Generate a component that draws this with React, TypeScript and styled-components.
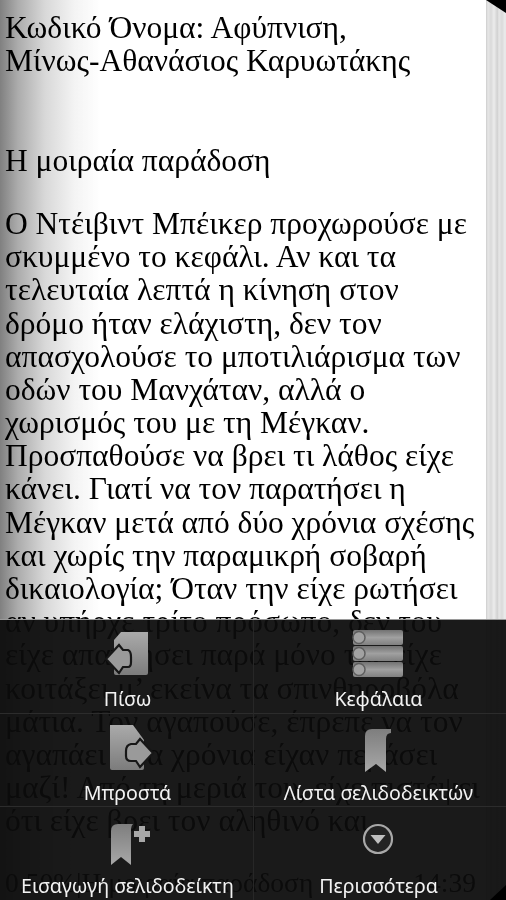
import styled, { createGlobalStyle } from 'styled-components';

const Global = createGlobalStyle`
  html, body {
    margin: 0;
    padding: 0;
    height: 900px;
    overflow: hidden;
    background: #fff;
  }
`;

const Screen = styled.div`
  position: relative;
  width: 506px;
  height: 900px;
  overflow: hidden;
  background: #fff;
`;

const Page = styled.div`
  padding: 11px 0 0 5px;
  font-family: 'Liberation Serif', 'Times New Roman', serif;
  font-size: 31.5px;
  line-height: 33.2px;
  color: #000;
  white-space: nowrap;
`;

const Line = styled.div<{ $short?: boolean }>`
  height: ${({ $short }) => ($short ? '30px' : '33.2px')};
`;

const StatusLine = styled.div`
  position: absolute;
  left: 5px;
  right: 30px;
  top: 866px;
  display: flex;
  justify-content: space-between;
  font-family: 'Liberation Serif', 'Times New Roman', serif;
  font-size: 27.5px;
  line-height: 33px;
  color: #000;
`;

const LeftShade = styled.div`
  position: absolute;
  left: 0;
  top: 0;
  bottom: 0;
  width: 100px;
  background: linear-gradient(to right, #808080 0%, #acacac 18%, #d8d8d8 45%, #f4f4f4 75%, rgba(255, 255, 255, 0) 100%);
  mix-blend-mode: multiply;
`;

const PageEdge = styled.div`
  position: absolute;
  right: 0;
  top: 0;
  bottom: 0;
  width: 20px;
  background: repeating-linear-gradient(
    to right,
    #cdcdcd 0,
    #e6e6e6 2px,
    #dadada 5px,
    #ececec 8px,
    #d4d4d4 11px
  );
`;

const Corner = styled.svg<{ $bottom?: boolean }>`
  position: absolute;
  right: 0;
  ${({ $bottom }) => ($bottom ? 'bottom: 0;' : 'top: 0;')}
  display: block;
`;

const Menu = styled.div`
  position: absolute;
  left: 0;
  right: 0;
  bottom: 0;
  height: 280px;
  display: grid;
  grid-template-columns: 1fr 1fr;
  grid-template-rows: 94px 93px 93px;
  background: rgba(12, 12, 12, 0.94);
  box-shadow: 0 -1px 0 #9a9a9a;
  box-sizing: border-box;
`;

const Item = styled.div<{ $last?: boolean; $right?: boolean }>`
  display: flex;
  flex-direction: column;
  align-items: center;
  padding-top: 10px;
  box-sizing: border-box;
  overflow: hidden;
  border-bottom: ${({ $last }) => ($last ? 'none' : '1px solid #2c2c2c')};
  border-left: ${({ $right }) => ($right ? '1px solid #272727' : 'none')};
`;

const IconBox = styled.svg`
  display: block;
  width: 48px;
  height: 48px;
  flex: none;
  overflow: visible;
  filter: blur(0.5px);
`;

const Label = styled.div<{ $right?: boolean }>`
  margin: ${({ $right }) => ($right ? '9px 3px 0 0' : '9px 0 0 2px')};
  font-family: 'Noto Sans', Roboto, sans-serif;
  font-size: 19.6px;
  line-height: 24px;
  color: #f2f2f2;
  white-space: nowrap;
`;

const lines = [
  'Κωδικό Όνομα: Αφύπνιση,',
  'Μίνως-Αθανάσιος Καρυωτάκης',
  '',
  '',
  'Η μοιραία παράδοση',
  '',
  'Ο Ντέιβιντ Μπέικερ προχωρούσε με',
  'σκυμμένο το κεφάλι. Αν και τα',
  'τελευταία λεπτά η κίνηση στον',
  'δρόμο ήταν ελάχιστη, δεν τον',
  'απασχολούσε το μποτιλιάρισμα των',
  'οδών του Μανχάταν, αλλά ο',
  'χωρισμός του με τη Μέγκαν.',
  'Προσπαθούσε να βρει τι λάθος είχε',
  'κάνει. Γιατί να τον παρατήσει η',
  'Μέγκαν μετά από δύο χρόνια σχέσης',
  'και χωρίς την παραμικρή σοβαρή',
  'δικαιολογία; Όταν την είχε ρωτήσει',
  'αν υπήρχε τρίτο πρόσωπο, δεν του',
  'είχε απαντήσει παρά μόνο της είχε',
  'κοιτάξει μ’ εκείνα τα σπινθηροβόλα',
  'μάτια. Τον αγαπούσε, έπρεπε να τον',
  'αγαπάει όσα χρόνια είχαν περάσει',
  'μαζί! Από τη μεριά του, είχε πιστέψει',
  'ότι είχε βρει τον αληθινό και',
];

const Gradients = () => (
  <svg width="0" height="0" style={{ position: 'absolute' }}>
    <defs>
      <linearGradient id="pageFill" x1="0" y1="0" x2="0" y2="1">
        <stop offset="0" stopColor="#aaaaaa" />
        <stop offset="1" stopColor="#7c7c7c" />
      </linearGradient>
      <linearGradient id="ribbonFill" x1="0" y1="0" x2="0" y2="1">
        <stop offset="0" stopColor="#7e7e7e" />
        <stop offset="1" stopColor="#a8a8a8" />
      </linearGradient>
      <linearGradient id="barFill" x1="0" y1="0" x2="0" y2="1">
        <stop offset="0" stopColor="#727272" />
        <stop offset="0.5" stopColor="#a0a0a0" />
        <stop offset="1" stopColor="#808080" />
      </linearGradient>
    </defs>
  </svg>
);

const BackIcon = () => (
  <IconBox viewBox="0 0 48 48">
    <path d="M11 10L18 2H45V43Q45 45 43 45H13Q11 45 11 43Z" fill="url(#pageFill)" />
    <path
      d="M3 29L16 15L20 20H25Q28 21 28 27V32Q28 37 25 37H20L16 43Z"
      fill="#9a9a9a"
      stroke="#171717"
      strokeWidth="2.2"
    />
  </IconBox>
);

const ForwardIcon = () => (
  <IconBox viewBox="0 0 48 48">
    <path d="M7 1H30L41 16V44Q41 46 39 46H9Q7 46 7 44Z" fill="url(#pageFill)" />
    <path
      d="M50 29L37 15L33 20H28Q23 21 23 27V32Q23 37 28 37H33L37 43Z"
      fill="#9a9a9a"
      stroke="#171717"
      strokeWidth="2.2"
    />
  </IconBox>
);

const AddBookmarkIcon = () => (
  <IconBox viewBox="0 0 48 48">
    <path d="M8 14Q8 7 15 7H30Q28 9 28 12V48L18 40L8 48Z" fill="url(#ribbonFill)" />
    <path d="M36 9H42V14H47V20H42V25H36V20H31V14H36Z" fill="#a8a8a8" />
  </IconBox>
);

const ChaptersIcon = () => (
  <IconBox viewBox="0 0 48 48">
    {[0, 16, 32].map((y) => (
      <g key={y}>
        <rect x="-3" y={y} width="50" height="15" rx="2" fill="url(#barFill)" />
        <circle cx="3" cy={y + 7.5} r="6" fill="#a2a2a2" stroke="#5e5e5e" strokeWidth="1.5" />
      </g>
    ))}
  </IconBox>
);

const BookmarksIcon = () => (
  <IconBox viewBox="0 0 48 48">
    <path d="M9 12Q9 5 16 5H35V9Q30 9 30 15V48L20 40L9 48Z" fill="url(#ribbonFill)" />
  </IconBox>
);

const MoreIcon = () => (
  <IconBox viewBox="0 0 48 48">
    <circle cx="22" cy="22" r="14" fill="#232323" stroke="#a8a8a8" strokeWidth="2.2" />
    <path d="M14.5 18H29.5L22 27Z" fill="#c0c0c0" />
  </IconBox>
);

export default function App() {
  return (
    <Screen>
      <Global />
      <Gradients />
      <Page>
        {lines.map((text, i) => (
          <Line key={i} $short={i === 5}>
            {text}
          </Line>
        ))}
      </Page>
      <StatusLine>
        <span>0.50%|Η μοιραία παράδοση</span>
        <span>14:39</span>
      </StatusLine>
      <LeftShade />
      <PageEdge />
      <Corner $bottom={false} width="20" height="13" viewBox="0 0 20 13">
        <path d="M0 0H20V13Z" fill="#000" />
      </Corner>
      <Menu>
        <Item>
          <BackIcon />
          <Label>Πίσω</Label>
        </Item>
        <Item $right>
          <ChaptersIcon />
          <Label $right>Κεφάλαια</Label>
        </Item>
        <Item>
          <ForwardIcon />
          <Label>Μπροστά</Label>
        </Item>
        <Item $right>
          <BookmarksIcon />
          <Label $right>Λίστα σελιδοδεικτών</Label>
        </Item>
        <Item $last>
          <AddBookmarkIcon />
          <Label>Εισαγωγή σελιδοδείκτη</Label>
        </Item>
        <Item $last $right>
          <MoreIcon />
          <Label $right>Περισσότερα</Label>
        </Item>
      </Menu>
      <Corner $bottom width="16" height="15" viewBox="0 0 16 15">
        <path d="M16 0V15H0Z" fill="#000" />
      </Corner>
    </Screen>
  );
}
